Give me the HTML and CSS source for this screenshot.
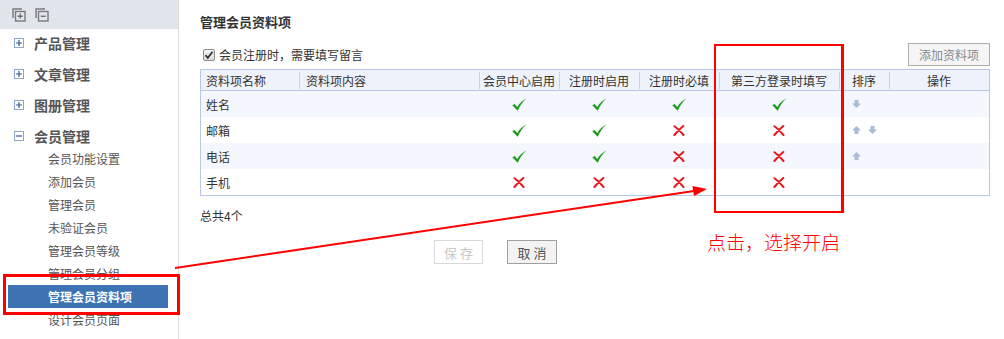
FILE: index.html
```html
<!DOCTYPE html>
<html lang="zh-CN">
<head>
<meta charset="utf-8">
<title>管理会员资料项</title>
<link rel="stylesheet" href="styles.css">
</head>
<body>
<div class="page">
  <aside class="sidebar">
    <div class="topbar">
      <svg class="tool-icon" width="14" height="14" viewBox="0 0 14 14"><path d="M1 10V1h9" fill="none" stroke="#7a7a7a" stroke-width="1.4"/><rect x="3.5" y="3.5" width="9.5" height="9.5" fill="none" stroke="#7a7a7a" stroke-width="1.4"/><path d="M8.25 5.5v5M5.75 8.25h5" stroke="#6a6a6a" stroke-width="1.3"/></svg>
      <svg class="tool-icon" width="14" height="14" viewBox="0 0 14 14"><path d="M1 10V1h9" fill="none" stroke="#7a7a7a" stroke-width="1.4"/><rect x="3.5" y="3.5" width="9.5" height="9.5" fill="none" stroke="#7a7a7a" stroke-width="1.4"/><path d="M5.75 8.25h5" stroke="#6a6a6a" stroke-width="1.3"/></svg>
    </div>
    <ul class="menu">
      <li class="menu-item"><span class="toggle"><svg width="8" height="8" viewBox="0 0 8 8"><path d="M4 1v6M1 4h6" stroke="#2f5a96" stroke-width="1.2"/></svg></span>产品管理</li>
      <li class="menu-item"><span class="toggle"><svg width="8" height="8" viewBox="0 0 8 8"><path d="M4 1v6M1 4h6" stroke="#2f5a96" stroke-width="1.2"/></svg></span>文章管理</li>
      <li class="menu-item"><span class="toggle"><svg width="8" height="8" viewBox="0 0 8 8"><path d="M4 1v6M1 4h6" stroke="#2f5a96" stroke-width="1.2"/></svg></span>图册管理</li>
      <li class="menu-item open"><span class="toggle"><svg width="8" height="8" viewBox="0 0 8 8"><path d="M1 4h6" stroke="#2f5a96" stroke-width="1.2"/></svg></span>会员管理</li>
    </ul>
    <ul class="submenu">
      <li>会员功能设置</li>
      <li>添加会员</li>
      <li>管理会员</li>
      <li>未验证会员</li>
      <li>管理会员等级</li>
      <li>管理会员分组</li>
      <li class="active">管理会员资料项</li>
      <li>设计会员页面</li>
    </ul>
  </aside>

  <main class="main">
    <h1 class="title">管理会员资料项</h1>
    <div class="toolbar">
      <label class="check-label"><span class="checkbox"><svg width="10" height="10" viewBox="0 0 10 10"><path d="M1.5 5.2l2.3 2.6L8.6 1.8" fill="none" stroke="#333" stroke-width="1.8"/></svg></span>会员注册时，需要填写留言</label>
      <button class="btn-add">添加资料项</button>
    </div>

    <div class="table">
      <div class="row head">
        <div class="cell c-name">资料项名称</div>
        <div class="cell c-content sep">资料项内容</div>
        <div class="cell center sep">会员中心启用</div>
        <div class="cell center sep">注册时启用</div>
        <div class="cell center sep">注册时必填</div>
        <div class="cell center sep">第三方登录时填写</div>
        <div class="cell center sep">排序</div>
        <div class="cell center sep">操作</div>
      </div>

      <div class="row odd">
        <div class="cell c-name">姓名</div>
        <div class="cell"></div>
        <div class="cell center"><svg class="ok" width="15" height="13" viewBox="0 0 15 13"><path d="M0.3 7.2L2.6 6L5.2 9Q8.6 3.2 14.7 0.3Q9.4 4.6 5.7 12.7Z"/></svg></div>
        <div class="cell center"><svg class="ok" width="15" height="13" viewBox="0 0 15 13"><path d="M0.3 7.2L2.6 6L5.2 9Q8.6 3.2 14.7 0.3Q9.4 4.6 5.7 12.7Z"/></svg></div>
        <div class="cell center"><svg class="ok" width="15" height="13" viewBox="0 0 15 13"><path d="M0.3 7.2L2.6 6L5.2 9Q8.6 3.2 14.7 0.3Q9.4 4.6 5.7 12.7Z"/></svg></div>
        <div class="cell center"><svg class="ok" width="15" height="13" viewBox="0 0 15 13"><path d="M0.3 7.2L2.6 6L5.2 9Q8.6 3.2 14.7 0.3Q9.4 4.6 5.7 12.7Z"/></svg></div>
        <div class="cell sort"><svg class="arrow" width="9" height="8" viewBox="0 0 9 8"><path d="M2.5 0h4v3.5H9L4.5 8 0 3.5h2.5z"/></svg></div>
        <div class="cell"></div>
      </div>

      <div class="row">
        <div class="cell c-name">邮箱</div>
        <div class="cell"></div>
        <div class="cell center"><svg class="ok" width="15" height="13" viewBox="0 0 15 13"><path d="M0.3 7.2L2.6 6L5.2 9Q8.6 3.2 14.7 0.3Q9.4 4.6 5.7 12.7Z"/></svg></div>
        <div class="cell center"><svg class="ok" width="15" height="13" viewBox="0 0 15 13"><path d="M0.3 7.2L2.6 6L5.2 9Q8.6 3.2 14.7 0.3Q9.4 4.6 5.7 12.7Z"/></svg></div>
        <div class="cell center"><svg class="no" width="12" height="11" viewBox="0 0 12 11"><path d="M1.5 1.2Q6 4.5 10.5 10M10.3 1Q5.5 5 1.4 10"/></svg></div>
        <div class="cell center"><svg class="no" width="12" height="11" viewBox="0 0 12 11"><path d="M1.5 1.2Q6 4.5 10.5 10M10.3 1Q5.5 5 1.4 10"/></svg></div>
        <div class="cell sort"><svg class="arrow" width="9" height="8" viewBox="0 0 9 8"><path d="M2.5 8h4V4.5H9L4.5 0 0 4.5h2.5z"/></svg><svg class="arrow" width="9" height="8" viewBox="0 0 9 8"><path d="M2.5 0h4v3.5H9L4.5 8 0 3.5h2.5z"/></svg></div>
        <div class="cell"></div>
      </div>

      <div class="row odd">
        <div class="cell c-name">电话</div>
        <div class="cell"></div>
        <div class="cell center"><svg class="ok" width="15" height="13" viewBox="0 0 15 13"><path d="M0.3 7.2L2.6 6L5.2 9Q8.6 3.2 14.7 0.3Q9.4 4.6 5.7 12.7Z"/></svg></div>
        <div class="cell center"><svg class="ok" width="15" height="13" viewBox="0 0 15 13"><path d="M0.3 7.2L2.6 6L5.2 9Q8.6 3.2 14.7 0.3Q9.4 4.6 5.7 12.7Z"/></svg></div>
        <div class="cell center"><svg class="no" width="12" height="11" viewBox="0 0 12 11"><path d="M1.5 1.2Q6 4.5 10.5 10M10.3 1Q5.5 5 1.4 10"/></svg></div>
        <div class="cell center"><svg class="no" width="12" height="11" viewBox="0 0 12 11"><path d="M1.5 1.2Q6 4.5 10.5 10M10.3 1Q5.5 5 1.4 10"/></svg></div>
        <div class="cell sort"><svg class="arrow" width="9" height="8" viewBox="0 0 9 8"><path d="M2.5 8h4V4.5H9L4.5 0 0 4.5h2.5z"/></svg></div>
        <div class="cell"></div>
      </div>

      <div class="row">
        <div class="cell c-name">手机</div>
        <div class="cell"></div>
        <div class="cell center"><svg class="no" width="12" height="11" viewBox="0 0 12 11"><path d="M1.5 1.2Q6 4.5 10.5 10M10.3 1Q5.5 5 1.4 10"/></svg></div>
        <div class="cell center"><svg class="no" width="12" height="11" viewBox="0 0 12 11"><path d="M1.5 1.2Q6 4.5 10.5 10M10.3 1Q5.5 5 1.4 10"/></svg></div>
        <div class="cell center"><svg class="no" width="12" height="11" viewBox="0 0 12 11"><path d="M1.5 1.2Q6 4.5 10.5 10M10.3 1Q5.5 5 1.4 10"/></svg></div>
        <div class="cell center"><svg class="no" width="12" height="11" viewBox="0 0 12 11"><path d="M1.5 1.2Q6 4.5 10.5 10M10.3 1Q5.5 5 1.4 10"/></svg></div>
        <div class="cell sort"></div>
        <div class="cell"></div>
      </div>
    </div>

    <div class="total">总共4个</div>
    <div class="actions">
      <button class="btn disabled">保存</button>
      <button class="btn">取消</button>
    </div>
  </main>

  <div class="mark-menu"></div>
  <div class="mark-col"></div>
  <div class="mark-text">点击，选择开启</div>
  <svg class="mark-arrow" width="1004" height="339" viewBox="0 0 1004 339">
    <line x1="175" y1="268" x2="694" y2="191" stroke="#f00" stroke-width="2"/>
    <polygon points="707,189 694,196 692.4,186" fill="#f00"/>
  </svg>
</div>
</body>
</html>
```

FILE: styles.css
```css
* { box-sizing: border-box; }

html, body {
  margin: 0;
  padding: 0;
  background: #fff;
}

body {
  font-family: "Noto Sans CJK SC", "Liberation Sans", sans-serif;
  font-size: 12px;
  color: #333;
}

.page {
  position: relative;
  display: flex;
  width: 1004px;
  height: 339px;
  overflow: hidden;
}

/* ---------- sidebar ---------- */
.sidebar {
  width: 179px;
  flex: none;
  border-right: 1px solid #dcdcdc;
  height: 100%;
}

.topbar {
  height: 29px;
  background: #e1e5ec;
  display: flex;
  align-items: center;
  gap: 9px;
  padding-left: 12px;
}

.tool-icon { display: block; }

.menu, .submenu {
  list-style: none;
  margin: 0;
  padding: 0;
}

.menu-item {
  height: 31px;
  padding: 4px 0 0 14px;
  display: flex;
  align-items: flex-start;
  font-size: 14px;
  line-height: 21px;
  font-weight: bold;
  color: #555;
}

.menu-item.open { height: 25px; }

.toggle {
  width: 10px;
  height: 10px;
  margin-top: 5px;
  border: 1px solid #8ea6c8;
  display: flex;
  align-items: center;
  justify-content: center;
  margin-right: 10px;
  background: #fff;
}

.toggle svg { display: block; }

.submenu li {
  height: 23px;
  line-height: 23px;
  padding-left: 48px;
  color: #555;
}

.submenu li.active {
  margin: 0 10px 0 8px;
  padding-left: 40px;
  background: #3d72b3;
  color: #fff;
  font-weight: bold;
}

/* ---------- main ---------- */
.main {
  flex: 1;
  padding: 0 14px 0 21px;
}

.title {
  margin: 0;
  padding-top: 14px;
  font-size: 13px;
  line-height: 16px;
  font-weight: bold;
  color: #333;
}

.toolbar {
  margin-top: 13px;
  height: 23px;
  display: flex;
  align-items: center;
  justify-content: space-between;
}

.check-label {
  display: flex;
  align-items: center;
  padding-left: 3px;
  color: #333;
}

.checkbox {
  width: 12px;
  height: 12px;
  border: 1px solid #8c8c8c;
  border-radius: 2px;
  background: linear-gradient(#f4f4f4, #dcdcdc);
  display: flex;
  align-items: center;
  justify-content: center;
  margin-right: 4px;
}

.checkbox svg { display: block; }

.btn-add {
  width: 82px;
  height: 23px;
  border: 1px solid #adadad;
  background: #f5f5f5;
  color: #888;
  font-family: inherit;
  font-size: 12px;
  padding: 0;
}

/* ---------- table ---------- */
.table {
  margin-top: 3px;
  width: 790px;
  border: 1px solid #b8c8e6;
}

.row {
  display: grid;
  grid-template-columns: 98px 180px 80px 80px 80px 120px 50px 100px;
  height: 26px;
  align-items: center;
}

.row.head {
  height: 21px;
  background: #edf2fb;
  border-bottom: 1px solid #b8c8e6;
}

.row.odd { background: #f4f8fe; }

.cell {
  position: relative;
  height: 100%;
  display: flex;
  align-items: center;
  white-space: nowrap;
}

.cell.center { justify-content: center; }

.c-name { padding-left: 5px; }
.c-content { padding-left: 7px; }

.head .cell.sep::before {
  content: "";
  position: absolute;
  left: 0;
  top: 2px;
  bottom: 1px;
  width: 1px;
  background: #c4d1e6;
}

.sort {
  padding-left: 13px;
  gap: 7px;
}

.ok { display: block; fill: #1a9a1a; }

.no {
  display: block;
  fill: none;
  stroke: #e5191b;
  stroke-width: 2;
  stroke-linecap: round;
}

.arrow { display: block; fill: #a8bcd8; }

.total {
  margin-top: 10px;
  line-height: 20px;
  color: #333;
}

.actions {
  margin-top: 14px;
  padding-left: 234px;
  display: flex;
  gap: 24px;
}

.btn {
  height: 24px;
  width: 50px;
  padding: 0 0 0 3px;
  font-family: inherit;
  font-size: 13px;
  letter-spacing: 3px;
  background: #f3f3f3;
  border: 1px solid #a0a0a0;
  color: #555;
}

.btn.disabled {
  width: 49px;
  background: #fff;
  border-color: #d8d8d8;
  color: #c8c8c8;
}

/* ---------- annotations ---------- */
.mark-menu {
  position: absolute;
  left: 3px;
  top: 274px;
  width: 177px;
  height: 41px;
  border: 3px solid #f00;
}

.mark-col {
  position: absolute;
  left: 714px;
  top: 44px;
  width: 130px;
  height: 169px;
  border: 2px solid #f00;
  border-right-width: 3px;
}

.mark-text {
  position: absolute;
  left: 707px;
  top: 230px;
  font-size: 19px;
  line-height: 24px;
  font-weight: 300;
  color: #f00;
  white-space: nowrap;
}

.mark-arrow {
  position: absolute;
  left: 0;
  top: 0;
  pointer-events: none;
}
```
